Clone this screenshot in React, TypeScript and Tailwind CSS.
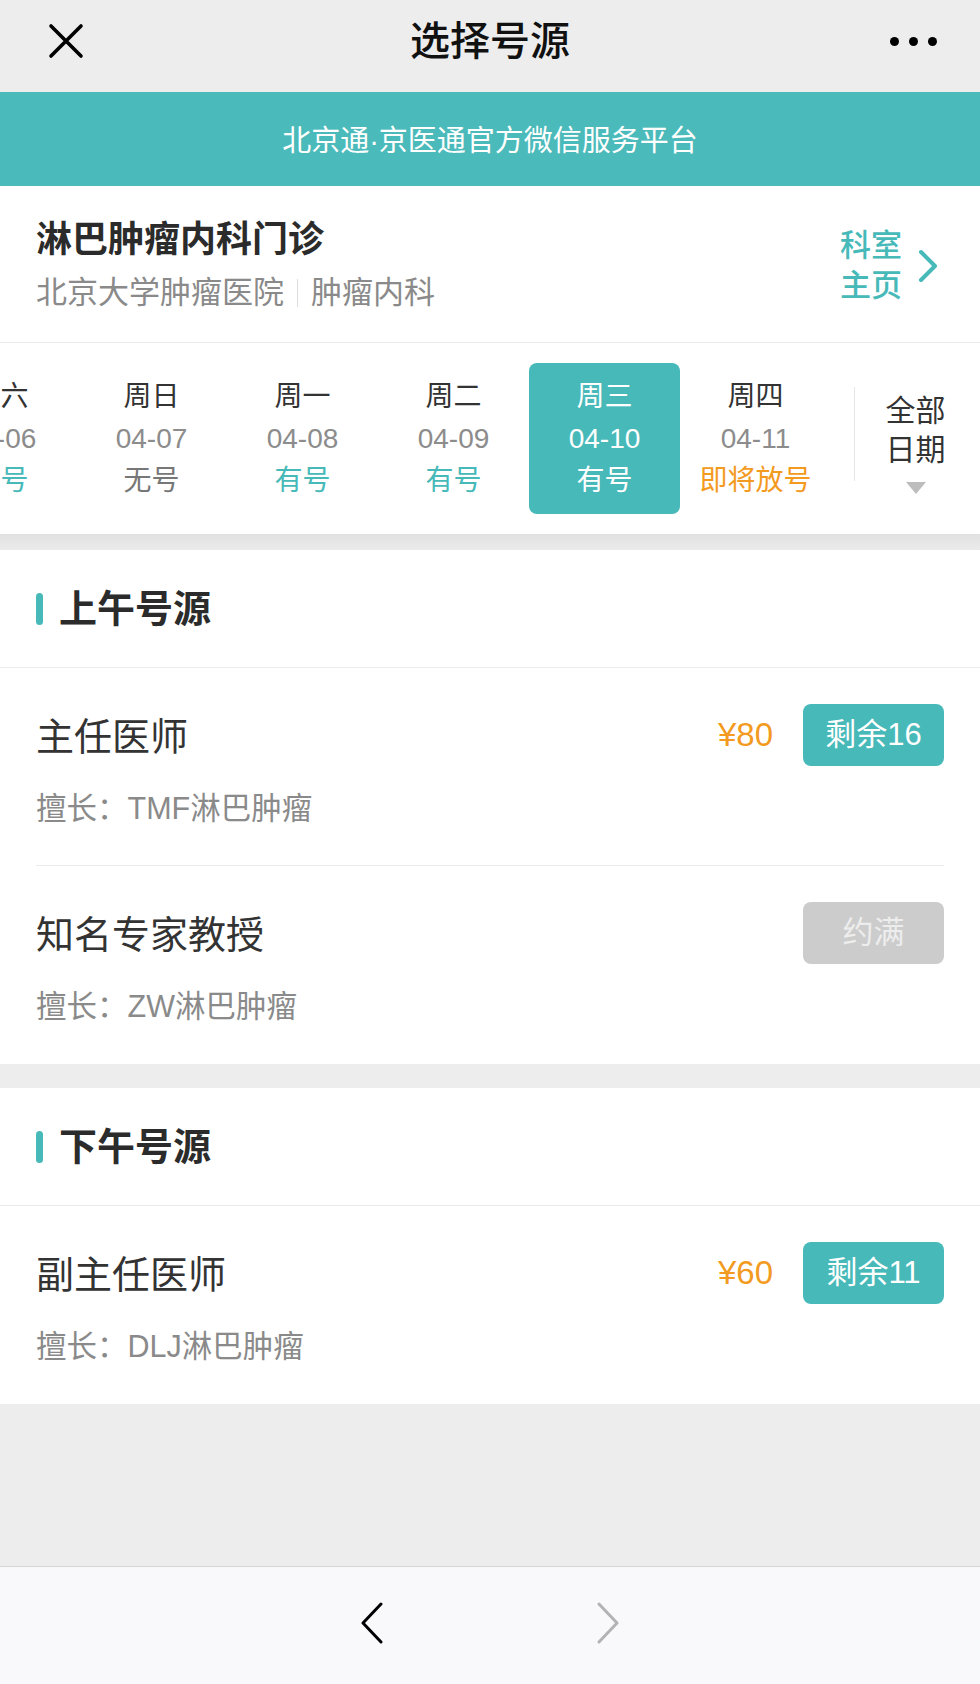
import React from 'react';

const days = [
    { week: '周六', date: '04-06', status: '有号', kind: 'ok' },
    { week: '周日', date: '04-07', status: '无号', kind: 'none' },
    { week: '周一', date: '04-08', status: '有号', kind: 'ok' },
    { week: '周二', date: '04-09', status: '有号', kind: 'ok' },
    { week: '周三', date: '04-10', status: '有号', kind: 'ok', selected: true },
    { week: '周四', date: '04-11', status: '即将放号', kind: 'soon' },
];

interface Doctor {
    title: string;
    skill: string;
    price?: string;
    left?: number;
}

const morning: Doctor[] = [
    { title: '主任医师', skill: 'TMF淋巴肿瘤', price: '¥80', left: 16 },
    { title: '知名专家教授', skill: 'ZW淋巴肿瘤' },
];

const afternoon: Doctor[] = [
    { title: '副主任医师', skill: 'DLJ淋巴肿瘤', price: '¥60', left: 11 },
];

const SectionTitle = ({ text }: { text: string }) => (
    <div className="h-[118px] flex items-center px-[36px] border-b border-[#ececec]">
        <div className="w-[7px] h-[32px] rounded-full bg-[#47b9b9]"></div>
        <span className="ml-[16px] text-[38px] leading-[50px] font-bold text-[#2b2b2b]">{text}</span>
    </div>
);

const DoctorRow = ({ doc, last }: { doc: Doctor; last: boolean }) => (
    <div className="px-[36px]">
        <div className={`h-[198px] flex justify-between ${last ? '' : 'border-b border-[#ececec]'}`}>
            <div className="pt-[44px]">
                <div className="text-[38px] leading-[50px] text-[#333]">{doc.title}</div>
                <div className="mt-[25px] text-[30.5px] leading-[42px] text-[#8a8a8a]">擅长：{doc.skill}</div>
            </div>
            <div className="pt-[36px] flex items-start gap-[30px]">
                {doc.price && (
                    <span className="h-[62px] flex items-center text-[33px] text-[#f39a21]">{doc.price}</span>
                )}
                {doc.left !== undefined ? (
                    <div className="w-[141px] h-[62px] rounded-[8px] bg-[#47b9b9] text-white text-[31px] flex items-center justify-center">
                        剩余{doc.left}
                    </div>
                ) : (
                    <div className="w-[141px] h-[62px] rounded-[8px] bg-[#cccccc] text-[#ededed] text-[31px] flex items-center justify-center">
                        约满
                    </div>
                )}
            </div>
        </div>
    </div>
);

export default function App() {
    return (
        <div className="w-[980px] h-[1684px] flex flex-col bg-[#ededed] font-['Liberation_Sans','Noto_Sans_CJK_SC',sans-serif]">
            {/* nav bar */}
            <div className="h-[92px] shrink-0 grid grid-cols-[1fr_auto_1fr] items-center pb-[10px] px-[48px] bg-[#ededed]">
                <svg width="36" height="36" viewBox="0 0 36 36">
                    <path d="M3 3 L33 33 M33 3 L3 33" stroke="#000" strokeWidth="3.6" strokeLinecap="round" />
                </svg>
                <div className="text-[40px] leading-[50px] font-medium text-[#111]">选择号源</div>
                <div className="flex justify-end gap-[10px] -mr-[5px]">
                    <div className="w-[9px] h-[9px] rounded-full bg-black"></div>
                    <div className="w-[9px] h-[9px] rounded-full bg-black"></div>
                    <div className="w-[9px] h-[9px] rounded-full bg-black"></div>
                </div>
            </div>

            {/* banner */}
            <div className="h-[94px] shrink-0 bg-[#4bbaba] flex items-center justify-center pt-[6px] text-white text-[29px]">
                北京通·京医通官方微信服务平台
            </div>

            {/* department */}
            <div className="h-[157px] shrink-0 bg-white border-b border-[#ececec] px-[36px] flex items-center justify-between">
                <div className="mt-[4px]">
                    <div className="text-[36px] leading-[44px] font-semibold text-[#2b2b2b]">淋巴肿瘤内科门诊</div>
                    <div className="mt-[10px] text-[31px] leading-[42px] text-[#8a8a8a] flex items-center">
                        <span>北京大学肿瘤医院</span>
                        <span className="mx-[13px] w-px h-[28px] bg-[#dddddd]"></span>
                        <span>肿瘤内科</span>
                    </div>
                </div>
                <div className="flex items-center gap-[16px] pr-[6px] pt-[3px]">
                    <div className="text-[31px] leading-[40px] font-medium text-[#47b9b9]">
                        <div>科室</div>
                        <div>主页</div>
                    </div>
                    <svg width="20" height="34" viewBox="0 0 20 34">
                        <path d="M3 3 L17 17 L3 31" fill="none" stroke="#47b9b9" strokeWidth="4" strokeLinecap="round" strokeLinejoin="round" />
                    </svg>
                </div>
            </div>

            {/* date strip */}
            <div className="h-[191px] shrink-0 bg-white flex items-center">
                <div className="flex-1 overflow-hidden h-full flex items-center">
                    <div className="flex -ml-[75px] shrink-0">
                        {days.map((d) => (
                            <div
                                key={d.date}
                                className={`w-[151px] h-[151px] shrink-0 rounded-[8px] flex flex-col items-center justify-center text-[28px] leading-[42px] ${
                                    d.selected ? 'bg-[#47b9b9] text-white' : ''
                                }`}
                            >
                                <span className={d.selected ? 'text-white' : 'text-[#333]'}>{d.week}</span>
                                <span className={d.selected ? 'text-white' : 'text-[#8c8c8c]'}>{d.date}</span>
                                <span
                                    className={
                                        d.selected
                                            ? 'text-white'
                                            : d.kind === 'ok'
                                            ? 'text-[#47b9b9]'
                                            : d.kind === 'soon'
                                            ? 'text-[#f39a21]'
                                            : 'text-[#777]'
                                    }
                                >
                                    {d.status}
                                </span>
                            </div>
                        ))}
                    </div>
                </div>
                <div className="w-[126px] h-full shrink-0 flex items-center">
                    <div className="w-px h-[94px] bg-[#e6e6e6] -mt-[10px]"></div>
                    <div className="flex-1 flex flex-col items-center pt-[8px] pr-[4px]">
                        <div className="text-[30px] leading-[39px] text-[#333] text-center">
                            <div>全部</div>
                            <div>日期</div>
                        </div>
                        <svg className="mt-[13px]" width="20" height="12" viewBox="0 0 20 12">
                            <path d="M0 0 L20 0 L10 12 Z" fill="#bdbdbd" />
                        </svg>
                    </div>
                </div>
            </div>

            <div className="h-[16px] shrink-0 bg-gradient-to-b from-[#e1e1e1] to-[#ebebeb]"></div>

            {/* morning */}
            <div className="bg-white shrink-0">
                <SectionTitle text="上午号源" />
                {morning.map((doc, i) => (
                    <DoctorRow key={doc.title} doc={doc} last={i === morning.length - 1} />
                ))}
            </div>

            <div className="h-[24px] shrink-0"></div>

            {/* afternoon */}
            <div className="bg-white shrink-0">
                <SectionTitle text="下午号源" />
                {afternoon.map((doc, i) => (
                    <DoctorRow key={doc.title} doc={doc} last={i === afternoon.length - 1} />
                ))}
            </div>

            <div className="flex-1"></div>

            {/* bottom toolbar */}
            <div className="h-[118px] shrink-0 border-t border-[#d6d6d6] bg-[#f9f9fb] flex items-center justify-center gap-[212px] pb-[6px]">
                <svg width="24" height="42" viewBox="0 0 24 42">
                    <path d="M21 2 L3 21 L21 40" fill="none" stroke="#000" strokeWidth="3" strokeLinecap="round" strokeLinejoin="round" />
                </svg>
                <svg width="24" height="42" viewBox="0 0 24 42">
                    <path d="M3 2 L21 21 L3 40" fill="none" stroke="#b3b3b3" strokeWidth="3" strokeLinecap="round" strokeLinejoin="round" />
                </svg>
            </div>
        </div>
    );
}
